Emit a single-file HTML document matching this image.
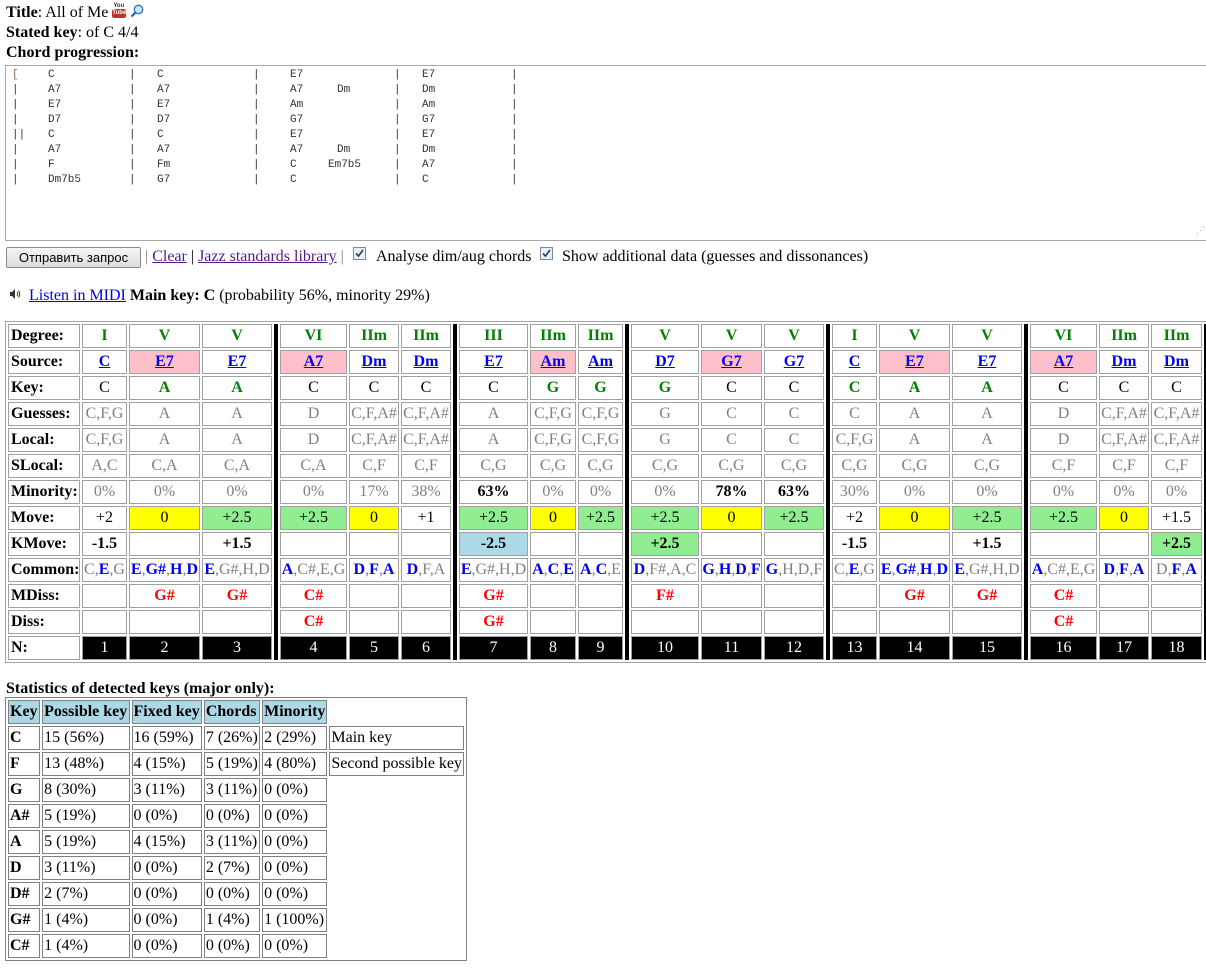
<!DOCTYPE html>
<html><head><meta charset="utf-8">
<style>
html,body{margin:0;padding:0;width:1206px;height:970px;overflow:hidden;background:#fff;}
body{font-family:"Liberation Serif",serif;font-size:16px;color:#000;}
#w{position:absolute;left:0;top:2px;width:1206px;height:968px;}
.abs{position:absolute;white-space:nowrap;}
a{color:#0000ee;}
.ta{position:absolute;left:5px;top:63px;width:1205px;height:176px;border:1px solid #a9a9a9;box-sizing:border-box;}
.ta div{position:absolute;font-family:"Liberation Mono",monospace;font-size:11px;color:#333;line-height:15px;height:15px;}
.br{color:#8b6a4a}.bb{color:#5b7fbf}
table.m{position:absolute;left:5px;top:319px;border:1px solid #a0a0a0;border-spacing:2px;table-layout:fixed;width:1206px;border-collapse:separate;}
table.m td{border:1px solid #a0a0a0;height:22px;line-height:22px;padding:0;text-align:center;white-space:nowrap;overflow:visible;font-size:16px;}
table.m td.l{text-align:left;font-weight:bold;padding-left:2px;}
table.m td.bar{background:#000;border:none;}
.g{color:#008000;font-weight:bold}
.gr{color:#808080}
.k{font-weight:bold}
.pk{background:#ffc0cb}
.ye{background:#ffff00}
.lg{background:#90ee90}
.lb{background:#add8e6}
.s a{font-weight:bold;color:#0000ee}
.b{color:#0000ee;font-weight:bold}
.r{color:#ff0000;font-weight:bold}
table.m td.n{background:#000;color:#fff;}
table.s2{position:absolute;left:5px;top:697px;border:1px solid #808080;border-spacing:2px;table-layout:fixed;width:462px;}
table.s2 td{border:1px solid #808080;height:22px;line-height:22px;padding:0 0 0 1px;white-space:nowrap;font-size:16px;}
table.s2 td.h{background:#add8e6;font-weight:bold;}
table.s2 td.e{border:none;}
</style></head><body><div id="w">
<div class="abs" style="left:6px;top:1px;line-height:20px"><b>Title</b>: All of Me <span style="display:inline-block;width:14px;height:15px;vertical-align:-1px;position:relative"><span style="position:absolute;left:1px;top:0;font:bold 6px 'Liberation Sans',sans-serif;color:#333">You</span><span style="position:absolute;left:0;top:6px;width:14px;height:9px;background:#c4302b;border-radius:2px;font:bold 6px 'Liberation Sans',sans-serif;color:#fff;line-height:9px;text-align:center">Tube</span></span> <svg width="14" height="14" viewBox="0 0 14 14" style="vertical-align:-1px"><circle cx="8.5" cy="5.5" r="4.2" fill="#cfe6fb" stroke="#3a7fd0" stroke-width="1.5"/><line x1="5.5" y1="8.5" x2="1.5" y2="12.5" stroke="#2a5fa8" stroke-width="2.2"/></svg></div>
<div class="abs" style="left:6px;top:21px;line-height:20px"><b>Stated key</b>: of C 4/4</div>
<div class="abs" style="left:6px;top:41px;line-height:20px"><b>Chord progression:</b></div>
<div class="ta">
<div style="top:2px;left:6px"><span class="br">[</span></div>
<div style="top:17px;left:6px" class="br">|</div>
<div style="top:32px;left:6px" class="br">|</div>
<div style="top:47px;left:6px" class="br">|</div>
<div style="top:62px;left:6px" class="br">||</div>
<div style="top:77px;left:6px" class="br">|</div>
<div style="top:92px;left:6px" class="br">|</div>
<div style="top:107px;left:6px" class="br">|</div>

<div style="top:2px;left:42px">C</div><div style="top:17px;left:42px">A7</div><div style="top:32px;left:42px">E7</div><div style="top:47px;left:42px">D7</div><div style="top:62px;left:42px">C</div><div style="top:77px;left:42px">A7</div><div style="top:92px;left:42px">F</div><div style="top:107px;left:42px">Dm7b5</div>

<div class="bb" style="top:2px;left:123px">|</div><div class="bb" style="top:17px;left:123px">|</div><div class="bb" style="top:32px;left:123px">|</div><div class="bb" style="top:47px;left:123px">|</div><div class="bb" style="top:62px;left:123px">|</div><div class="bb" style="top:77px;left:123px">|</div><div class="bb" style="top:92px;left:123px">|</div><div class="bb" style="top:107px;left:123px">|</div>

<div style="top:2px;left:151px">C</div><div style="top:17px;left:151px">A7</div><div style="top:32px;left:151px">E7</div><div style="top:47px;left:151px">D7</div><div style="top:62px;left:151px">C</div><div style="top:77px;left:151px">A7</div><div style="top:92px;left:151px">Fm</div><div style="top:107px;left:151px">G7</div>

<div class="br" style="top:2px;left:247px">|</div><div class="br" style="top:17px;left:247px">|</div><div class="br" style="top:32px;left:247px">|</div><div class="br" style="top:47px;left:247px">|</div><div class="br" style="top:62px;left:247px">|</div><div class="br" style="top:77px;left:247px">|</div><div class="br" style="top:92px;left:247px">|</div><div class="br" style="top:107px;left:247px">|</div>

<div style="top:2px;left:284px">E7</div><div style="top:17px;left:284px">A7</div><div style="top:32px;left:284px">Am</div><div style="top:47px;left:284px">G7</div><div style="top:62px;left:284px">E7</div><div style="top:77px;left:284px">A7</div><div style="top:92px;left:284px">C</div><div style="top:107px;left:284px">C</div>
<div style="top:17px;left:331px">Dm</div><div style="top:77px;left:331px">Dm</div><div style="top:92px;left:322px">Em7b5</div>

<div class="br" style="top:2px;left:388px">|</div><div class="br" style="top:17px;left:388px">|</div><div class="br" style="top:32px;left:388px">|</div><div class="br" style="top:47px;left:388px">|</div><div class="br" style="top:62px;left:388px">|</div><div class="br" style="top:77px;left:388px">|</div><div class="br" style="top:92px;left:388px">|</div><div class="br" style="top:107px;left:388px">|</div>

<div style="top:2px;left:416px">E7</div><div style="top:17px;left:416px">Dm</div><div style="top:32px;left:416px">Am</div><div style="top:47px;left:416px">G7</div><div style="top:62px;left:416px">E7</div><div style="top:77px;left:416px">Dm</div><div style="top:92px;left:416px">A7</div><div style="top:107px;left:416px">C</div>

<div class="bb" style="top:2px;left:505px">|</div><div class="bb" style="top:17px;left:505px">|</div><div class="bb" style="top:32px;left:505px">|</div><div class="bb" style="top:47px;left:505px">|</div><div class="bb" style="top:62px;left:505px">|</div><div class="bb" style="top:77px;left:505px">|</div><div class="bb" style="top:92px;left:505px">|</div><div class="bb" style="top:107px;left:505px">|</div>
<div style="right:4px;bottom:1px;color:#aaa;font-size:9px">⋰</div>
</div>

<div class="abs" style="left:6px;top:245px;width:135px;height:21px;border:1px solid #8a8a8a;border-radius:2px;background:linear-gradient(#f6f6f6,#dcdcdc);box-sizing:border-box;font:13px 'Liberation Sans',sans-serif;line-height:19px;text-align:center;">Отправить запрос</div>
<div class="abs" style="left:145px;top:245px;line-height:20px"><span style="color:#808080">|</span> <a href="#" style="color:#551a8b">Clear</a> | <a href="#" style="color:#551a8b">Jazz standards library</a> <span style="color:#808080">|</span></div>
<div class="abs" style="left:353px;top:245px;width:13px;height:13px;border:1px solid #7a8aa0;background:#e8eef6;box-sizing:border-box;"><svg width="11" height="11" viewBox="0 0 11 11" style="position:absolute;left:0;top:0"><path d="M2 5.5 L4.5 8 L9 2" stroke="#2b3a55" stroke-width="1.6" fill="none"/></svg></div>
<div class="abs" style="left:376px;top:245px;line-height:20px">Analyse dim/aug chords</div>
<div class="abs" style="left:540px;top:245px;width:13px;height:13px;border:1px solid #7a8aa0;background:#e8eef6;box-sizing:border-box;"><svg width="11" height="11" viewBox="0 0 11 11" style="position:absolute;left:0;top:0"><path d="M2 5.5 L4.5 8 L9 2" stroke="#2b3a55" stroke-width="1.6" fill="none"/></svg></div>
<div class="abs" style="left:562px;top:245px;line-height:20px">Show additional data (guesses and dissonances)</div>

<div class="abs" style="left:9px;top:285px"><svg width="12" height="12" viewBox="0 0 12 12"><path d="M1 4 H3 L6 1 V11 L3 8 H1 Z" fill="#333"/><path d="M8 4 Q9.5 6 8 8 M9.5 2.5 Q12 6 9.5 9.5" stroke="#333" fill="none" stroke-width="1"/></svg></div>
<div class="abs" style="left:25px;top:284px;line-height:20px">&nbsp;<a href="#">Listen in MIDI</a> <b>Main key: C</b> (probability 56%, minority 29%)</div>

<table class="m">
<colgroup><col style="width:72px"><col style="width:45px"><col style="width:71px"><col style="width:70px"><col style="width:4px"><col style="width:67px"><col style="width:50px"><col style="width:50px"><col style="width:4px"><col style="width:69px"><col style="width:46px"><col style="width:45px"><col style="width:4px"><col style="width:68px"><col style="width:61px"><col style="width:60px"><col style="width:4px"><col style="width:45px"><col style="width:71px"><col style="width:70px"><col style="width:4px"><col style="width:67px"><col style="width:50px"><col style="width:51px"><col style="width:4px"></colgroup>
<tr><td class="l">Degree:</td><td class="g">I</td><td class="g">V</td><td class="g">V</td><td class="bar" rowspan="13"></td><td class="g">VI</td><td class="g">IIm</td><td class="g">IIm</td><td class="bar" rowspan="13"></td><td class="g">III</td><td class="g">IIm</td><td class="g">IIm</td><td class="bar" rowspan="13"></td><td class="g">V</td><td class="g">V</td><td class="g">V</td><td class="bar" rowspan="13"></td><td class="g">I</td><td class="g">V</td><td class="g">V</td><td class="bar" rowspan="13"></td><td class="g">VI</td><td class="g">IIm</td><td class="g">IIm</td><td class="bar" rowspan="13"></td></tr>
<tr class="s"><td class="l">Source:</td><td><a href="#">C</a></td><td class="pk"><a href="#">E7</a></td><td><a href="#">E7</a></td><td class="pk"><a href="#">A7</a></td><td><a href="#">Dm</a></td><td><a href="#">Dm</a></td><td><a href="#">E7</a></td><td class="pk"><a href="#">Am</a></td><td><a href="#">Am</a></td><td><a href="#">D7</a></td><td class="pk"><a href="#">G7</a></td><td><a href="#">G7</a></td><td><a href="#">C</a></td><td class="pk"><a href="#">E7</a></td><td><a href="#">E7</a></td><td class="pk"><a href="#">A7</a></td><td><a href="#">Dm</a></td><td><a href="#">Dm</a></td></tr>
<tr><td class="l">Key:</td><td>C</td><td class="g">A</td><td class="g">A</td><td>C</td><td>C</td><td>C</td><td>C</td><td class="g">G</td><td class="g">G</td><td class="g">G</td><td>C</td><td>C</td><td class="g">C</td><td class="g">A</td><td class="g">A</td><td>C</td><td>C</td><td>C</td></tr>
<tr class="gr"><td class="l" style="color:#000">Guesses:</td><td>C,F,G</td><td>A</td><td>A</td><td>D</td><td>C,F,A#</td><td>C,F,A#</td><td>A</td><td>C,F,G</td><td>C,F,G</td><td>G</td><td>C</td><td>C</td><td>C</td><td>A</td><td>A</td><td>D</td><td>C,F,A#</td><td>C,F,A#</td></tr>
<tr class="gr"><td class="l" style="color:#000">Local:</td><td>C,F,G</td><td>A</td><td>A</td><td>D</td><td>C,F,A#</td><td>C,F,A#</td><td>A</td><td>C,F,G</td><td>C,F,G</td><td>G</td><td>C</td><td>C</td><td>C,F,G</td><td>A</td><td>A</td><td>D</td><td>C,F,A#</td><td>C,F,A#</td></tr>
<tr class="gr"><td class="l" style="color:#000">SLocal:</td><td>A,C</td><td>C,A</td><td>C,A</td><td>C,A</td><td>C,F</td><td>C,F</td><td>C,G</td><td>C,G</td><td>C,G</td><td>C,G</td><td>C,G</td><td>C,G</td><td>C,G</td><td>C,G</td><td>C,G</td><td>C,F</td><td>C,F</td><td>C,F</td></tr>
<tr class="gr"><td class="l" style="color:#000">Minority:</td><td>0%</td><td>0%</td><td>0%</td><td>0%</td><td>17%</td><td>38%</td><td class="k" style="color:#000">63%</td><td>0%</td><td>0%</td><td>0%</td><td class="k" style="color:#000">78%</td><td class="k" style="color:#000">63%</td><td>30%</td><td>0%</td><td>0%</td><td>0%</td><td>0%</td><td>0%</td></tr>
<tr><td class="l">Move:</td><td>+2</td><td class="ye">0</td><td class="lg">+2.5</td><td class="lg">+2.5</td><td class="ye">0</td><td>+1</td><td class="lg">+2.5</td><td class="ye">0</td><td class="lg">+2.5</td><td class="lg">+2.5</td><td class="ye">0</td><td class="lg">+2.5</td><td>+2</td><td class="ye">0</td><td class="lg">+2.5</td><td class="lg">+2.5</td><td class="ye">0</td><td>+1.5</td></tr>
<tr class="k"><td class="l">KMove:</td><td>-1.5</td><td></td><td>+1.5</td><td></td><td></td><td></td><td class="lb">-2.5</td><td></td><td></td><td class="lg">+2.5</td><td></td><td></td><td>-1.5</td><td></td><td>+1.5</td><td></td><td></td><td class="lg">+2.5</td></tr>
<tr class="gr"><td class="l" style="color:#000">Common:</td><td>C,<span class="b">E</span>,G</td><td><span class="b">E</span>,<span class="b">G#</span>,<span class="b">H</span>,<span class="b">D</span></td><td><span class="b">E</span>,G#,H,D</td><td><span class="b">A</span>,C#,E,G</td><td><span class="b">D</span>,<span class="b">F</span>,<span class="b">A</span></td><td><span class="b">D</span>,F,A</td><td><span class="b">E</span>,G#,H,D</td><td><span class="b">A</span>,<span class="b">C</span>,<span class="b">E</span></td><td><span class="b">A</span>,<span class="b">C</span>,E</td><td><span class="b">D</span>,F#,A,C</td><td><span class="b">G</span>,<span class="b">H</span>,<span class="b">D</span>,<span class="b">F</span></td><td><span class="b">G</span>,H,D,F</td><td>C,<span class="b">E</span>,G</td><td><span class="b">E</span>,<span class="b">G#</span>,<span class="b">H</span>,<span class="b">D</span></td><td><span class="b">E</span>,G#,H,D</td><td><span class="b">A</span>,C#,E,G</td><td><span class="b">D</span>,<span class="b">F</span>,<span class="b">A</span></td><td>D,<span class="b">F</span>,<span class="b">A</span></td></tr>
<tr class="r"><td class="l" style="color:#000">MDiss:</td><td></td><td>G#</td><td>G#</td><td>C#</td><td></td><td></td><td>G#</td><td></td><td></td><td>F#</td><td></td><td></td><td></td><td>G#</td><td>G#</td><td>C#</td><td></td><td></td></tr>
<tr class="r"><td class="l" style="color:#000">Diss:</td><td></td><td></td><td></td><td>C#</td><td></td><td></td><td>G#</td><td></td><td></td><td></td><td></td><td></td><td></td><td></td><td></td><td>C#</td><td></td><td></td></tr>
<tr><td class="l">N:</td><td class="n">1</td><td class="n">2</td><td class="n">3</td><td class="n">4</td><td class="n">5</td><td class="n">6</td><td class="n">7</td><td class="n">8</td><td class="n">9</td><td class="n">10</td><td class="n">11</td><td class="n">12</td><td class="n">13</td><td class="n">14</td><td class="n">15</td><td class="n">16</td><td class="n">17</td><td class="n">18</td></tr>
</table>

<div class="abs" style="left:6px;top:677px;line-height:20px"><b>Statistics of detected keys (major only):</b></div>
<table class="s2" style="top:695px">
<colgroup><col style="width:32px"><col style="width:87px"><col style="width:70px"><col style="width:56px"><col style="width:65px"><col style="width:134px"></colgroup>
<tr><td class="h">Key</td><td class="h">Possible key</td><td class="h">Fixed key</td><td class="h">Chords</td><td class="h">Minority</td><td class="e"></td></tr>
<tr><td><b>C</b></td><td>15 (56%)</td><td>16 (59%)</td><td>7 (26%)</td><td>2 (29%)</td><td>Main key</td></tr>
<tr><td><b>F</b></td><td>13 (48%)</td><td>4 (15%)</td><td>5 (19%)</td><td>4 (80%)</td><td>Second possible key</td></tr>
<tr><td><b>G</b></td><td>8 (30%)</td><td>3 (11%)</td><td>3 (11%)</td><td>0 (0%)</td><td class="e"></td></tr>
<tr><td><b>A#</b></td><td>5 (19%)</td><td>0 (0%)</td><td>0 (0%)</td><td>0 (0%)</td><td class="e"></td></tr>
<tr><td><b>A</b></td><td>5 (19%)</td><td>4 (15%)</td><td>3 (11%)</td><td>0 (0%)</td><td class="e"></td></tr>
<tr><td><b>D</b></td><td>3 (11%)</td><td>0 (0%)</td><td>2 (7%)</td><td>0 (0%)</td><td class="e"></td></tr>
<tr><td><b>D#</b></td><td>2 (7%)</td><td>0 (0%)</td><td>0 (0%)</td><td>0 (0%)</td><td class="e"></td></tr>
<tr><td><b>G#</b></td><td>1 (4%)</td><td>0 (0%)</td><td>1 (4%)</td><td>1 (100%)</td><td class="e"></td></tr>
<tr><td><b>C#</b></td><td>1 (4%)</td><td>0 (0%)</td><td>0 (0%)</td><td>0 (0%)</td><td class="e"></td></tr>
</table>
</div></body></html>
